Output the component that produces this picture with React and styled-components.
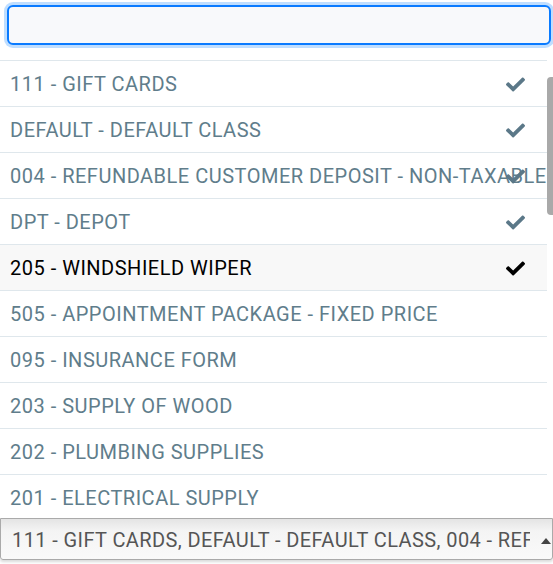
import styled, { createGlobalStyle } from "styled-components";
import { FaCheck } from "react-icons/fa";

const GlobalStyle = createGlobalStyle`
    html, body {
        margin: 0;
        padding: 0;
        background: #fff;
    }

    body {
        font-family: Roboto, "Liberation Sans", sans-serif;
    }
`;

const options = [
    { label: "111 - GIFT CARDS", checked: true },
    { label: "DEFAULT - DEFAULT CLASS", checked: true },
    { label: "004 - REFUNDABLE CUSTOMER DEPOSIT - NON-TAXABLE", checked: true },
    { label: "DPT - DEPOT", checked: true },
    { label: "205 - WINDSHIELD WIPER", checked: true, active: true },
    { label: "505 - APPOINTMENT PACKAGE - FIXED PRICE" },
    { label: "095 - INSURANCE FORM" },
    { label: "203 - SUPPLY OF WOOD" },
    { label: "202 - PLUMBING SUPPLIES" },
    { label: "201 - ELECTRICAL SUPPLY" },
];

export default function App() {
    const summary = options
        .filter((o) => o.checked)
        .map((o) => o.label)
        .join(", ");

    return (
        <Wrapper>
            <GlobalStyle />
            <Dropdown>
                <Search>
                    <SearchInput type="text" autoFocus />
                </Search>
                <Body>
                    <List>
                        {options.map((o) => (
                            <Option key={o.label} $active={o.active}>
                                {o.label}
                                {o.checked && (
                                    <Tick $active={o.active}>
                                        <FaCheck />
                                    </Tick>
                                )}
                            </Option>
                        ))}
                    </List>
                    <ScrollTrack>
                        <ScrollThumb />
                    </ScrollTrack>
                </Body>
            </Dropdown>
            <Select>
                <SelectText>{summary}</SelectText>
                <Caret />
            </Select>
        </Wrapper>
    );
}

const Wrapper = styled.div`
    width: 553px;
    height: 564px;
    overflow: hidden;
`;

const Dropdown = styled.div`
    display: flex;
    flex-direction: column;
    height: 518px;
`;

const Search = styled.div`
    padding: 5px 2px 15px 7px;
`;

const SearchInput = styled.input`
    display: block;
    box-sizing: border-box;
    width: 100%;
    height: 40px;
    border: 2px solid #0a7bff;
    border-radius: 6px;
    background: #f8f9fb;
    box-shadow: 0 0 0 3px rgba(0, 123, 255, 0.25);
    outline: none;
    font: 20px Roboto, "Liberation Sans", sans-serif;
    padding: 0 10px;
`;

const Body = styled.div`
    flex: 1;
    display: flex;
    min-height: 0;
`;

const List = styled.ul`
    flex: 1;
    margin: 0;
    padding: 0;
    list-style: none;
    overflow: hidden;
    border-top: 1px solid #dfe7ec;
`;

const Option = styled.li`
    position: relative;
    height: 45px;
    line-height: 47px;
    padding-left: 10px;
    white-space: nowrap;
    font-size: 20px;
    letter-spacing: 0.5px;
    color: ${(p) => (p.$active ? "#000" : "#607d8b")};
    background: ${(p) => (p.$active ? "#f8f8f8" : "#fff")};
    border-bottom: 1px solid #dfe7ec;
`;

const Tick = styled.span`
    position: absolute;
    right: 22px;
    top: 14px;
    display: flex;
    font-size: 19px;
    color: ${(p) => (p.$active ? "#000" : "#5b7888")};
`;

const ScrollTrack = styled.div`
    width: 6px;
    display: flex;
    flex-direction: column;
`;

const ScrollThumb = styled.div`
    margin-top: 17px;
    height: 138px;
    background: #a9a9a9;
    border-radius: 4px 0 0 4px;
`;

const Select = styled.div`
    display: flex;
    align-items: center;
    box-sizing: border-box;
    height: 42px;
    padding: 2px 1px 0 11px;
    border: 1px solid #aaa;
    border-radius: 0 0 3px 3px;
    background: linear-gradient(to bottom, #e4e4e4 0%, #f4f4f4 30%, #fafafa 100%);
    box-shadow: 0 2px 3px rgba(0, 0, 0, 0.15);
`;

const SelectText = styled.span`
    flex: 1;
    overflow: hidden;
    white-space: nowrap;
    font-size: 20px;
    letter-spacing: 0.4px;
    color: #555;
`;

const Caret = styled.span`
    width: 0;
    height: 0;
    margin: 2px 0 0 11px;
    border-left: 5px solid transparent;
    border-right: 5px solid transparent;
    border-bottom: 6px solid #444;
`;
